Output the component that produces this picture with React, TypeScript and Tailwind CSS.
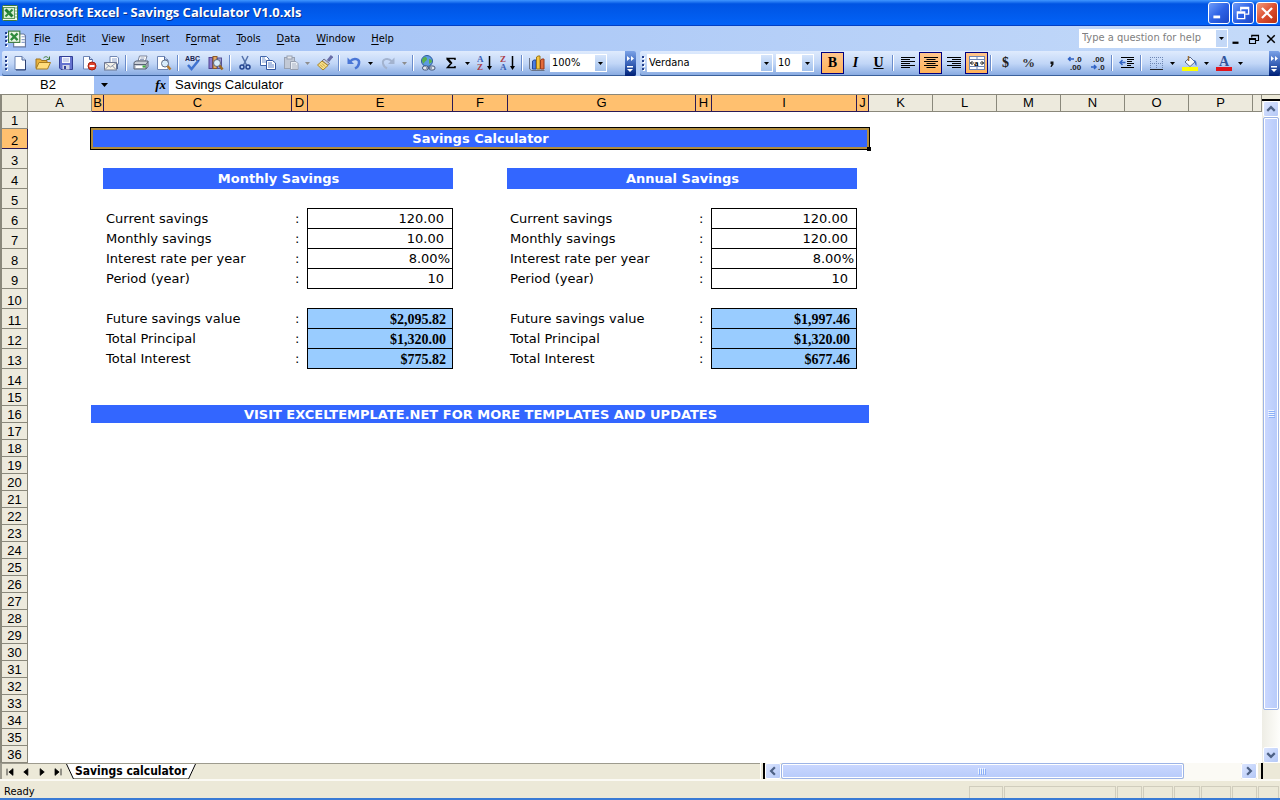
import type { ReactNode } from "react";

const menus = ["File", "Edit", "View", "Insert", "Format", "Tools", "Data", "Window", "Help"];
const menuKeys: Record<string, number> = { Format: 1 };

const columns = [
  { name: "A", width: "w-[64px]", active: false },
  { name: "B", width: "w-[12px]", active: true },
  { name: "C", width: "w-[188px]", active: true },
  { name: "D", width: "w-[16px]", active: true },
  { name: "E", width: "w-[145px]", active: true },
  { name: "F", width: "w-[55px]", active: true },
  { name: "G", width: "w-[188px]", active: true },
  { name: "H", width: "w-[16px]", active: true },
  { name: "I", width: "w-[145px]", active: true },
  { name: "J", width: "w-[12px]", active: true },
  { name: "K", width: "w-[64px]", active: false },
  { name: "L", width: "w-[64px]", active: false },
  { name: "M", width: "w-[64px]", active: false },
  { name: "N", width: "w-[64px]", active: false },
  { name: "O", width: "w-[64px]", active: false },
  { name: "P", width: "w-[64px]", active: false },
  { name: "", width: "", active: false },
];

type Line = { left: [string, string]; right: [string, string]; result?: boolean };

const lines: Record<number, Line> = {
  6: { left: ["Current savings", "120.00"], right: ["Current savings", "120.00"] },
  7: { left: ["Monthly savings", "10.00"], right: ["Monthly savings", "120.00"] },
  8: { left: ["Interest rate per year", "8.00%"], right: ["Interest rate per year", "8.00%"] },
  9: { left: ["Period (year)", "10"], right: ["Period (year)", "10"] },
  11: { left: ["Future savings value", "$2,095.82"], right: ["Future savings value", "$1,997.46"], result: true },
  12: { left: ["Total Principal", "$1,320.00"], right: ["Total Principal", "$1,320.00"], result: true },
  13: { left: ["Total Interest", "$775.82"], right: ["Total Interest", "$677.46"], result: true },
};

const statusPanels = ["w-[34px]", "w-[112px]", "w-[25px]", "w-[30px]", "w-[26px]", "w-[30px]", "w-[25px]", "w-[21px]"];

function Svg({ children, size = 16 }: { children: ReactNode; size?: number }) {
  return (
    <svg width={size} height={size} viewBox="0 0 16 16" fill="none" aria-hidden="true">
      {children}
    </svg>
  );
}

function Arrow({ className = "text-black" }: { className?: string }) {
  return (
    <svg className={className} width="5" height="3" viewBox="0 0 5 3" fill="currentColor" aria-hidden="true">
      <path d="M0 0h5L2.5 3z" />
    </svg>
  );
}

function Tool({ label, active, children }: { label: string; active?: boolean; children: ReactNode }) {
  return (
    <button
      type="button"
      aria-label={label}
      className={
        active
          ? "flex h-[22px] w-[23px] shrink-0 items-center justify-center border border-[#000080] bg-linear-to-b from-[#ffc58c] to-[#ffb258]"
          : "flex h-[22px] w-[23px] shrink-0 items-center justify-center"
      }
    >
      {children}
    </button>
  );
}

function Drop({ label, muted }: { label: string; muted?: boolean }) {
  return (
    <button type="button" aria-label={label} className="flex h-[22px] w-[11px] shrink-0 items-center justify-center">
      <Arrow className={muted ? "text-[#8d8d8d]" : "text-black"} />
    </button>
  );
}

function Sep() {
  return (
    <div className="flex h-[16px] w-[6px] shrink-0 justify-center">
      <div className="w-px bg-[#6a8ccb]" />
      <div className="w-px bg-white" />
    </div>
  );
}

function Grip() {
  return (
    <svg className="shrink-0" width="3" height="16" viewBox="0 0 3 16" aria-hidden="true">
      {[1, 5, 9, 13].map((y) => (
        <g key={y}>
          <rect x="1" y={y + 1} width="2" height="2" fill="#fff" />
          <rect x="0" y={y} width="2" height="2" fill="#27418e" />
        </g>
      ))}
    </svg>
  );
}

function Combo({ label, value, width }: { label: string; value: string; width: string }) {
  return (
    <div className={`relative h-[18px] shrink-0 bg-white ${width}`}>
      <select aria-label={label} className="block h-full w-full appearance-none bg-transparent pl-[2px] text-[11px] leading-4">
        <option>{value}</option>
      </select>
      <span className="pointer-events-none absolute inset-y-px right-px flex w-[11px] items-center justify-center bg-linear-to-b from-[#d6e5fb] to-[#a3c1ec]">
        <Arrow />
      </span>
    </div>
  );
}

function More() {
  return (
    <button
      type="button"
      aria-label="Toolbar options"
      className="flex h-[25px] w-[11px] shrink-0 items-center justify-center rounded-r-[2px] bg-linear-to-b from-[#7ba2e7] via-[#3b64ba] to-[#001d75]"
    >
      <svg width="9" height="23" viewBox="0 0 9 23" aria-hidden="true">
        <path d="M1 4l3 2.500-3 2.500zM5 4l3 2.500-3 2.500z" fill="#fff" />
        <path d="M1 14h6v1.500H1zM1 17h6l-3 3z" fill="#fff" />
      </svg>
    </button>
  );
}

function ExcelMark({ size = 16 }: { size?: number }) {
  return (
    <Svg size={size}>
      <rect x=".5" y=".5" width="15" height="15" rx="1" fill="#f2f8ea" stroke="#3d7a3d" />
      <path d="M13 3h2M13 6h2M13 9h2M13 12h2" stroke="#79a879" />
      <rect x="1.500" y="2.500" width="11" height="11" fill="#d9ecd2" stroke="#5c9a5c" />
      <path d="M3.500 4.500l7 7" stroke="#1f7a33" strokeWidth="3" />
      <path d="M10.500 4.500l-7 7" stroke="#2f8b3c" strokeWidth="2" />
    </Svg>
  );
}

function StandardTools() {
  return (
    <>
      <Tool label="New">
        <Svg>
          <path d="M3 1.500h7l3.500 3.500v9.500H3z" fill="#fff" stroke="#6d85b5" />
          <path d="M10 1.500V5h3.500" fill="#c9d8f2" stroke="#50689c" />
          <path d="M13.500 5v10H4" stroke="#2b3f70" />
        </Svg>
      </Tool>
      <Tool label="Open">
        <Svg>
          <path d="M1 13V4h4.500l1 1.500H12V13z" fill="#e9b33e" stroke="#9c7320" />
          <path d="M1 14l3-6.500h11.500L12.500 14z" fill="#ffdd7c" stroke="#a67c22" />
          <path d="M8.500 3c2-2 4-1.500 5 .5M14.500 1.500v3h-3" stroke="#3f7a36" />
        </Svg>
      </Tool>
      <Tool label="Save">
        <Svg>
          <path d="M1.500 1.500h13v13H3L1.500 13z" fill="#6572cf" stroke="#323f96" />
          <rect x="4" y="2" width="8" height="6" fill="#f4f6ff" />
          <path d="M5 4h6M5 6h6" stroke="#a6b0dc" />
          <rect x="4.500" y="10" width="7" height="4.500" fill="#cfd3e6" />
          <rect x="6" y="11" width="2" height="3" fill="#323f96" />
        </Svg>
      </Tool>
      <Tool label="Permission">
        <Svg>
          <path d="M2.500 1.500h6l3 3v9.500h-9z" fill="#fff" stroke="#6d85b5" />
          <path d="M8.500 1.500v3h3" fill="#c9d8f2" stroke="#50689c" />
          <circle cx="11" cy="11" r="4" fill="#e0442c" stroke="#a3200f" />
          <path d="M8.500 11h5" stroke="#fff" strokeWidth="2" />
        </Svg>
      </Tool>
      <Tool label="E-mail">
        <Svg>
          <path d="M6 1.500h7l1.500 1.500V9H6z" fill="#fff" stroke="#7288b4" />
          <path d="M8 4h5M8 6h5" stroke="#8fa4ce" />
          <rect x=".5" y="7.500" width="12" height="7.500" fill="#f3f1e8" stroke="#6d7690" />
          <path d="M.5 7.500l6 4.500 6-4.500M.5 15l4-4M12.500 15l-4-4" stroke="#8b93a8" />
          <path d="M13.500 9v5" stroke="#516896" />
        </Svg>
      </Tool>
      <Sep />
      <Tool label="Print">
        <Svg>
          <path d="M5 6l1.500-5H14l-1.500 5z" fill="#fff" stroke="#7a8399" />
          <path d="M7.500 3h4M7 4.500h4" stroke="#9aa6c0" />
          <path d="M1 7.500L3 6h12v5.500L13 14H1z" fill="#c9ced8" stroke="#596275" />
          <path d="M1 9.500h12M13 14V9.500l2-3" stroke="#596275" />
          <path d="M3 12h7" stroke="#fff" strokeWidth="2" />
          <rect x="9.500" y="10.500" width="3" height="2" fill="#40b13c" />
        </Svg>
      </Tool>
      <Tool label="Print preview">
        <Svg>
          <path d="M1.500 1.500h7l3.500 3.500v9.500H1.500z" fill="#fff" stroke="#6d85b5" />
          <path d="M8.500 1.500V5H12" fill="#c9d8f2" stroke="#50689c" />
          <circle cx="9" cy="8.500" r="3.500" fill="#d8ecfb" stroke="#5f6e8a" />
          <path d="M11.500 11l3 3.500" stroke="#b67a2c" strokeWidth="2.500" />
        </Svg>
      </Tool>
      <Sep />
      <Tool label="Spelling">
        <Svg>
          <text x="0" y="6" fontSize="7" fontWeight="bold" fontFamily="Liberation Sans, sans-serif" fill="#1b2450">
            ABC
          </text>
          <path d="M3 10l3.500 4L13.500 5.500" stroke="#3f73d1" strokeWidth="2.500" />
        </Svg>
      </Tool>
      <Tool label="Research">
        <Svg>
          <rect x="1" y="2.500" width="3.500" height="11" fill="#8a7ad0" stroke="#4e4290" />
          <rect x="5" y="1.500" width="4" height="12" fill="#e3a866" stroke="#8c5a28" />
          <rect x="9.500" y="3" width="4" height="10.500" fill="#9c9bd6" stroke="#555295" />
          <circle cx="9" cy="8" r="3.500" fill="#d8ecfb" stroke="#5c6577" />
          <path d="M11.500 10.500l3 4" stroke="#9c6a22" strokeWidth="2.500" />
        </Svg>
      </Tool>
      <Sep />
      <Tool label="Cut">
        <Svg>
          <path d="M5 1l4.500 9M11 1L6.500 10" stroke="#5573ab" strokeWidth="1.500" />
          <circle cx="5" cy="12" r="2" stroke="#24448f" strokeWidth="1.500" />
          <circle cx="11" cy="12" r="2" stroke="#24448f" strokeWidth="1.500" />
        </Svg>
      </Tool>
      <Tool label="Copy">
        <Svg>
          <path d="M.5 1.500h6l2.500 2.500v6.500H.5z" fill="#fff" stroke="#4267ab" />
          <path d="M2 5h4M2 7h4M2 3h3" stroke="#7897d1" />
          <path d="M6.500 5.500h6L15.500 8v6.500h-9z" fill="#fff" stroke="#3457a0" />
          <path d="M8 8h4M8 10h6M8 12h6" stroke="#5f82c9" />
        </Svg>
      </Tool>
      <Tool label="Paste">
        <Svg>
          <rect x="1.500" y="2.500" width="10" height="11" fill="#c2c9d6" stroke="#98a1b2" />
          <rect x="4" y="1" width="5" height="3" fill="#e4e7ed" stroke="#98a1b2" />
          <path d="M7.500 6.500H13l2 2v6H7.500z" fill="#e9edf4" stroke="#98a1b2" />
          <path d="M9 9h4M9 11h5M9 13h5" stroke="#a9b2c3" />
        </Svg>
      </Tool>
      <Drop label="Paste options" muted />
      <Tool label="Format painter">
        <Svg>
          <path d="M15 1l-4 5" stroke="#6a6ea8" strokeWidth="3" />
          <path d="M7 4l5.500 4.500-1.500 2-6-4.500z" fill="#c8c9d8" stroke="#6e7087" />
          <path d="M5 6l6 4.500L6 15 .5 10z" fill="#f8e08a" stroke="#a98425" />
          <path d="M3 9.500l3 3M5 8.500l3 3" stroke="#c59c36" />
        </Svg>
      </Tool>
      <Sep />
      <Tool label="Undo">
        <Svg>
          <path d="M4 6.500C8 2 14 4 13 8.500c-.5 2.500-2 4-4 5" stroke="#4a76d6" strokeWidth="2.500" />
          <path d="M1.500 2.500v6.500H8z" fill="#4a76d6" />
        </Svg>
      </Tool>
      <Drop label="Undo list" />
      <Tool label="Redo">
        <Svg>
          <path d="M12 6.500C8 2 2 4 3 8.500c.5 2.500 2 4 4 5" stroke="#a3b3cf" strokeWidth="2" />
          <path d="M14.500 2.500v6.500H8z" fill="#a3b3cf" />
        </Svg>
      </Tool>
      <Drop label="Redo list" muted />
      <Sep />
      <Tool label="Hyperlink">
        <Svg>
          <circle cx="7" cy="6" r="5.500" fill="#5c9be0" stroke="#2d5b9f" />
          <path d="M3 3c2-2 4-1 4 1S4 6 4 9C2 7 1 5 3 3zM9 4c2 0 3 1 3 3L9 9z" fill="#59b04b" />
          <rect x="2.500" y="11" width="6" height="4" rx="2" fill="#e1e6ee" stroke="#44597c" />
          <rect x="9" y="11" width="6" height="4" rx="2" fill="#e1e6ee" stroke="#44597c" />
          <path d="M6 13h6" stroke="#44597c" />
        </Svg>
      </Tool>
      <Tool label="AutoSum">
        <Svg>
          <path d="M12 5V3.500H4.500L8.500 8l-4 4.500H12V11" stroke="#000" strokeWidth="1.500" />
          <path d="M4 3.500L8 8" stroke="#000" strokeWidth="2" />
        </Svg>
      </Tool>
      <Drop label="AutoSum functions" />
      <Tool label="Sort ascending">
        <SortIcon top="A" bottom="Z" topColor="#3a5fb4" bottomColor="#ab3c46" />
      </Tool>
      <Tool label="Sort descending">
        <SortIcon top="Z" bottom="A" topColor="#ab3c46" bottomColor="#3a5fb4" />
      </Tool>
      <Sep />
      <Tool label="Chart wizard">
        <Svg>
          <path d="M.5 3v11l2 1.500h13" stroke="#6b7487" />
          <path d="M3.500 6l1.500-1h2v9h-3.500z" fill="#4b7de0" stroke="#274a98" />
          <path d="M7.500 2L9 1h2v13H7.500z" fill="#f5c640" stroke="#9e7716" />
          <path d="M11.500 5L13 4h2v10h-3.500z" fill="#e36a3a" stroke="#97381a" />
        </Svg>
      </Tool>
    </>
  );
}

function SortIcon(p: { top: string; bottom: string; topColor: string; bottomColor: string }) {
  return (
    <Svg>
      <g fontSize="9" fontWeight="bold" fontFamily="Liberation Serif, serif">
        <text x="0" y="7" fill={p.topColor}>
          {p.top}
        </text>
        <text x="0" y="15" fill={p.bottomColor}>
          {p.bottom}
        </text>
      </g>
      <path d="M12.500 1v12" stroke="#000" strokeWidth="1.500" />
      <path d="M10 11h5l-2.500 4z" fill="#000" />
    </Svg>
  );
}

function DecimalIcon({ top, bottom, flip }: { top: string; bottom: string; flip?: boolean }) {
  return (
    <Svg>
      <g fontSize="8" fontWeight="bold" fontFamily="Liberation Sans, sans-serif" fill="#222">
        <text x={flip ? 3 : 8} y="7">
          {top}
        </text>
        <text x={flip ? 8 : 3} y="15">
          {bottom}
        </text>
      </g>
      {flip ? (
        <path d="M1 12h5M4 10l2 2-2 2" stroke="#2f62c4" strokeWidth="1.500" />
      ) : (
        <path d="M7 4H1M3.500 2l-2 2 2 2" stroke="#2f62c4" strokeWidth="1.500" />
      )}
    </Svg>
  );
}

function FormatTools() {
  return (
    <>
      <Tool label="Bold" active>
        <span className="font-['Liberation_Serif',serif] text-[14px] leading-4 font-bold">B</span>
      </Tool>
      <Tool label="Italic">
        <span className="font-['Liberation_Serif',serif] text-[14px] leading-4 font-bold italic">I</span>
      </Tool>
      <Tool label="Underline">
        <span className="font-['Liberation_Serif',serif] text-[14px] leading-4 font-bold underline">U</span>
      </Tool>
      <Sep />
      <Tool label="Align left">
        <Svg>
          <path d="M1 2.500h14M1 4.500h9M1 6.500h14M1 8.500h9M1 10.500h14M1 12.500h9" stroke="#000" />
        </Svg>
      </Tool>
      <Tool label="Center" active>
        <Svg>
          <path d="M1 2.500h14M3.500 4.500h9M1 6.500h14M3.500 8.500h9M1 10.500h14M3.500 12.500h9" stroke="#000" />
        </Svg>
      </Tool>
      <Tool label="Align right">
        <Svg>
          <path d="M1 2.500h14M6 4.500h9M1 6.500h14M6 8.500h9M1 10.500h14M6 12.500h9" stroke="#000" />
        </Svg>
      </Tool>
      <Tool label="Merge and center" active>
        <Svg>
          <rect x=".5" y="1.500" width="15" height="13" fill="#fff" stroke="#6f86b5" />
          <path d="M1 4.500h14M1 11.500h14M8 1.500v3M8 11.500v3" stroke="#6f86b5" />
          <path d="M1 8h4M11 8h4M3.500 6L1.500 8l2 2M12.500 6l2 2-2 2" stroke="#222" />
          <text x="5" y="10.500" fontSize="9" fontWeight="bold" fontFamily="Liberation Serif, serif" fill="#000">
            a
          </text>
        </Svg>
      </Tool>
      <Sep />
      <Tool label="Currency style">
        <span className="font-['Liberation_Serif',serif] text-[14px] leading-4 font-bold text-[#222]">$</span>
      </Tool>
      <Tool label="Percent style">
        <span className="font-['Liberation_Serif',serif] text-[13px] leading-4 font-bold text-[#333]">%</span>
      </Tool>
      <Tool label="Comma style">
        <Svg>
          <path d="M6.500 6.500h3v3L7.500 12H6.500l1-3h-1z" fill="#111" />
        </Svg>
      </Tool>
      <Tool label="Increase decimal">
        <DecimalIcon top=".0" bottom=".00" />
      </Tool>
      <Tool label="Decrease decimal">
        <DecimalIcon top=".00" bottom=".0" flip />
      </Tool>
      <Sep />
      <Tool label="Decrease indent">
        <Svg>
          <path d="M2 2.500h13M8 4.500h7M8 6.500h5M8 8.500h7M8 10.500h4M2 12.500h13" stroke="#000" />
          <path d="M6.500 7.500H1M3.500 5l-2.500 2.500 2.500 2.500" stroke="#2f62c4" strokeWidth="1.500" />
        </Svg>
      </Tool>
      <Sep />
      <Tool label="Borders">
        <Svg>
          <path d="M2 2.500h13M2 8.500h13M2.500 2v12M8.500 2v12M14.500 2v12" stroke="#7088b4" strokeDasharray="1 1" />
          <path d="M2 14.500h13" stroke="#222" />
        </Svg>
      </Tool>
      <Drop label="Border styles" />
      <Tool label="Fill color">
        <Svg>
          <path d="M3 7l5-5 5 5-5 4.500z" fill="#f6f8fc" stroke="#5b6c92" />
          <path d="M6.500 1v5" stroke="#9b6f36" strokeWidth="1.500" />
          <path d="M11 5c3 0 4 2 3.500 6-1.500-1-2-3-1.500-4z" fill="#3f6fc9" />
          <rect x="0" y="12" width="16" height="4" fill="#ffff00" />
        </Svg>
      </Tool>
      <Drop label="Fill colors" />
      <Tool label="Font color">
        <Svg>
          <text x="3" y="11" fontSize="14" fontWeight="bold" fontFamily="Liberation Serif, serif" fill="#31559d">
            A
          </text>
          <rect x="0" y="12" width="16" height="4" fill="#e0131b" />
        </Svg>
      </Tool>
      <Drop label="Font colors" />
    </>
  );
}

function TitleBar() {
  return (
    <header className="flex h-[26px] items-center bg-linear-to-b from-[#3f96ff] via-[#0054e3] via-15% to-[#0363f8] px-[2px] shadow-[inset_0_-1px_0_#0340c4]">
      <ExcelMark />
      <h1 className="ml-[3px] flex-1 font-['Open_Sans',sans-serif] text-[13px] font-bold text-white [text-shadow:1px_1px_0_#0a2f8a]">
        Microsoft Excel - Savings Calculator V1.0.xls
      </h1>
      <div className="flex gap-[2px]">
        <button type="button" aria-label="Minimize" className="rounded-[3px] border border-white bg-linear-to-br from-[#6f9bf8] via-[#2e63e6] to-[#1c46c6] p-px">
          <Svg size={18}>
            <path d="M3 11.500h6" stroke="#fff" strokeWidth="2.500" />
          </Svg>
        </button>
        <button type="button" aria-label="Restore" className="rounded-[3px] border border-white bg-linear-to-br from-[#6f9bf8] via-[#2e63e6] to-[#1c46c6] p-px">
          <Svg size={18}>
            <path d="M6 6V3h7v6h-3M6 4h7" stroke="#fff" strokeWidth="1.200" />
            <path d="M3 7h6.500v6H3zM3 8h6.500" stroke="#fff" strokeWidth="1.200" />
          </Svg>
        </button>
        <button type="button" aria-label="Close" className="rounded-[3px] border border-white bg-linear-to-br from-[#f0997c] via-[#dd5030] to-[#b82e0e] p-px">
          <Svg size={18}>
            <path d="M3.500 3.500l9 9M12.500 3.500l-9 9" stroke="#fff" strokeWidth="2" />
          </Svg>
        </button>
      </div>
    </header>
  );
}

function MenuBar() {
  return (
    <nav className="flex h-[25px] items-center pl-[5px] text-[11px]">
      <Grip />
      <div>
        <Svg size={18}>
          <path d="M5 3.500h9l1.500 1.500v10H5z" fill="#fff" stroke="#66789f" />
          <path d="M12 6h3M12 8.500h3M12 11h3" stroke="#8ba0c8" />
          <rect x=".5" y="1" width="10" height="10" fill="#eaf5e4" stroke="#3d7a3d" />
          <path d="M2.500 3l6 6M8.500 3l-6 6" stroke="#2f8b3c" strokeWidth="2" />
        </Svg>
      </div>
      {menus.map((m) => {
        const k = menuKeys[m] ?? 0;
        return (
          <button key={m} type="button" className="px-2 pt-px">
            {m.slice(0, k)}
            <span className="underline underline-offset-2">{m[k]}</span>
            {m.slice(k + 1)}
          </button>
        );
      })}
      <div className="ml-auto flex h-[19px] w-[149px] bg-white">
        <input
          aria-label="Type a question for help"
          placeholder="Type a question for help"
          className="min-w-0 flex-1 pl-[3px] outline-none placeholder:text-[#808080]"
        />
        <button type="button" aria-label="Recent questions" className="my-px mr-px flex w-[11px] items-center justify-center bg-[#c3d8f7]">
          <Arrow />
        </button>
      </div>
      <div className="ml-[3px] flex items-center gap-[5px] pr-[3px]">
        <button type="button" aria-label="Minimize workbook">
          <Svg size={12}>
            <path d="M2 13h8" stroke="#000" strokeWidth="3" />
          </Svg>
        </button>
        <button type="button" aria-label="Restore workbook">
          <Svg size={12}>
            <path d="M5 6V3h9v7h-4M5 3.500h9M2 7.500h8V14H2zM2 8.500h8" stroke="#000" strokeWidth="1.500" />
          </Svg>
        </button>
        <button type="button" aria-label="Close workbook">
          <Svg size={12}>
            <path d="M3 3l10 10M13 3L3 13" stroke="#000" strokeWidth="2" />
          </Svg>
        </button>
      </div>
    </nav>
  );
}

function Toolbars() {
  return (
    <div className="flex h-[25px] pl-[2px]">
      <div className="flex w-[634px] shrink-0 items-center rounded-[2px] bg-linear-to-b from-[#dfebfd] via-[#c1d6f7] to-[#85a8e0] pb-px pl-[3px] shadow-[inset_0_-1px_0_#3b619c]">
        <Grip />
        <StandardTools />
        <div className="ml-[2px]">
          <Combo label="Zoom" value="100%" width="w-[57px]" />
        </div>
        <div className="ml-auto self-start">
          <More />
        </div>
      </div>
      <div className="ml-1 flex min-w-0 flex-1 items-center rounded-l-[2px] bg-linear-to-b from-[#dfebfd] via-[#c1d6f7] to-[#85a8e0] pb-px pl-[2px] shadow-[inset_0_-1px_0_#3b619c]">
        <Grip />
        <div className="mr-[7px] ml-[2px] flex gap-[3px]">
          <Combo label="Font" value="Verdana" width="w-[126px]" />
          <Combo label="Font size" value="10" width="w-[38px]" />
        </div>
        <FormatTools />
        <div className="ml-auto self-start">
          <More />
        </div>
      </div>
    </div>
  );
}

function FormulaBar() {
  return (
    <div className="flex h-[18px] items-stretch bg-white pl-[2px] font-['Liberation_Sans',sans-serif] text-[13px] leading-4">
      <input aria-label="Name box" defaultValue="B2" className="w-[92px] bg-white text-center outline-none" />
      <button type="button" aria-label="Defined names" className="flex w-[20px] items-center justify-center bg-[#9ebef5]">
        <svg width="7" height="4" viewBox="0 0 7 4" aria-hidden="true">
          <path d="M0 0h7L3.500 4z" />
        </svg>
      </button>
      <button type="button" aria-label="Insert function" className="w-[55px] shrink-0 bg-[#9ebef5] pr-[3px] text-right font-['Liberation_Serif',serif] text-[13px] font-bold italic">
        fx
      </button>
      <input aria-label="Formula bar" defaultValue="Savings Calculator" className="min-w-0 flex-1 bg-white pl-[6px] outline-none" />
    </div>
  );
}

const barCell =
  "bg-[#3366ff] text-center align-middle font-bold text-white shadow-[-1px_-1px_0_#3366ff,-1px_0_0_#3366ff,0_-1px_0_#3366ff]";

function Pair({ label, value, result }: { label: string; value: string; result?: boolean }) {
  const inputPad = value.endsWith("%") ? "pr-[2px]" : "pr-2";
  return (
    <>
      <td className="pl-[2px] align-middle whitespace-nowrap">{label}</td>
      <td className="pl-[3px] align-middle">:</td>
      <td
        className={
          result
            ? "border-r border-b border-black bg-[#99ccff] pt-[2px] pr-[6px] text-right align-bottom font-['Liberation_Serif',serif] text-[14px] font-bold shadow-[-1px_-1px_0_#000,-1px_0_0_#000,0_-1px_0_#000]"
            : `border-r border-b border-black text-right align-middle shadow-[-1px_-1px_0_#000,-1px_0_0_#000,0_-1px_0_#000] ${inputPad}`
        }
      >
        {value}
      </td>
    </>
  );
}

function RowCells({ n }: { n: number }) {
  if (n === 2) {
    return (
      <>
        <td />
        <td colSpan={9} className={`relative ${barCell}`}>
          Savings Calculator
          <span className="absolute -top-[2px] -right-px -bottom-px -left-[2px] border border-black shadow-[inset_0_0_0_2px_#b08c3c]" />
          <span className="absolute -right-[2px] -bottom-[2px] size-1 bg-black" />
        </td>
        <td colSpan={7} />
      </>
    );
  }
  if (n === 4) {
    return (
      <>
        <td colSpan={2} />
        <td colSpan={3} className={barCell}>
          Monthly Savings
        </td>
        <td />
        <td colSpan={3} className={barCell}>
          Annual Savings
        </td>
        <td colSpan={8} />
      </>
    );
  }
  if (n === 16) {
    return (
      <>
        <td />
        <td colSpan={9} className={barCell}>
          VISIT EXCELTEMPLATE.NET FOR MORE TEMPLATES AND UPDATES
        </td>
        <td colSpan={7} />
      </>
    );
  }
  const line = lines[n];
  if (!line) return <td colSpan={17} />;
  return (
    <>
      <td colSpan={2} />
      <Pair label={line.left[0]} value={line.left[1]} result={line.result} />
      <td />
      <Pair label={line.right[0]} value={line.right[1]} result={line.result} />
      <td colSpan={8} />
    </>
  );
}

function Sheet() {
  const rows = Array.from({ length: 36 }, (_, i) => i + 1);
  return (
    <div className="min-w-0 flex-1 overflow-hidden border-t border-l-2 border-[#8a887b] bg-white">
      <table className="w-full table-fixed border-separate border-spacing-0 font-['Verdana','DejaVu_Sans',sans-serif] text-[13px] leading-4">
        <colgroup>
          <col className="w-[26px]" />
          {columns.map((c, i) => (
            <col key={i} className={c.width} />
          ))}
        </colgroup>
        <thead className="font-['Liberation_Sans',sans-serif]">
          <tr className="h-[17px]">
            <th className="border-r border-b border-[#8a887b] bg-[#ece9d8]" />
            {columns.map((c, i) => (
              <th
                key={i}
                className={
                  c.active
                    ? "border-r border-b border-[#2a1a55] bg-[#ffc06f] font-normal"
                    : "border-r border-b border-[#8a887b] bg-[#edeadd] font-normal"
                }
              >
                {c.name}
              </th>
            ))}
          </tr>
        </thead>
        <tbody>
          {rows.map((n) => (
            <tr key={n} className={n > 1 && n < 15 ? "h-[20px]" : "h-[17px]"}>
              <th
                scope="row"
                className={
                  n === 2
                    ? "border-r border-b border-[#2a1a55] bg-[#ffc06f] pt-[2px] align-bottom font-['Liberation_Sans',sans-serif] leading-[14px] font-normal"
                    : "border-r border-b border-[#8a887b] bg-[#edeadd] pt-[2px] align-bottom font-['Liberation_Sans',sans-serif] leading-[14px] font-normal"
                }
              >
                {n}
              </th>
              <RowCells n={n} />
            </tr>
          ))}
        </tbody>
      </table>
    </div>
  );
}

function ScrollButton({ label, d }: { label: string; d: string }) {
  return (
    <button type="button" aria-label={label} className="flex size-4 shrink-0 items-center justify-center rounded-[2px] border border-white bg-linear-to-br from-[#dbe5ff] to-[#b4c8f6]">
      <Svg size={12}>
        <path d={d} stroke="#4d6185" strokeWidth="3" />
      </Svg>
    </button>
  );
}

function VerticalScroll() {
  return (
    <div className="flex w-[18px] shrink-0 flex-col items-center bg-linear-to-r from-[#eeede5] to-[#fefefb]">
      <div className="h-[7px] w-full shrink-0 border-t border-b-2 border-t-[#8a887b] border-b-black bg-[#ece9d8]" />
      <ScrollButton label="Scroll up" d="M3 10.500l5-5 5 5" />
      <div className="flex w-4 grow-[16] basis-0 items-center justify-center rounded-[2px] border border-[#9db4e6] bg-linear-to-r from-[#cbd8ff] to-[#b7cbfa] shadow-[inset_0_0_0_1px_#fff]">
        <svg width="7" height="8" viewBox="0 0 7 8" aria-hidden="true">
          <path d="M0 .5h6M0 2.500h6M0 4.500h6M0 6.500h6" stroke="#eef4fe" />
          <path d="M1 1.500h6M1 3.500h6M1 5.500h6M1 7.500h6" stroke="#8cb0f8" />
        </svg>
      </div>
      <div className="grow basis-0" />
      <ScrollButton label="Scroll down" d="M3 5.500l5 5 5-5" />
    </div>
  );
}

const navButtons = [
  { label: "First sheet", d: "M4 3.500v9M12 3.500v9L6.500 8z" },
  { label: "Previous sheet", d: "M10.500 3.500v9L5 8z" },
  { label: "Next sheet", d: "M5.500 3.500v9L11 8z" },
  { label: "Last sheet", d: "M12 3.500v9M4 3.500v9L9.500 8z" },
];

function TabBar() {
  return (
    <div className="grid h-[18px] grid-cols-[760fr_520fr] border-b-2 border-[#fbfaf4] bg-[#ece9d8]">
      <div className="flex overflow-hidden border-t border-l-2 border-[#9d9b8e]">
        {navButtons.map((b) => (
          <button key={b.label} type="button" aria-label={b.label} className="flex w-4 shrink-0 items-center justify-center">
            <Svg size={12}>
              <path d={b.d} fill="#000" stroke="#000" />
            </Svg>
          </button>
        ))}
        <div className="flex">
          <svg className="shrink-0" width="8" height="16" viewBox="0 0 8 16" aria-hidden="true">
            <path d="M0 0h8v15H7z" fill="#fff" />
            <path d="M.5 0L7.500 15" stroke="#000" />
          </svg>
          <button type="button" className="border-b border-[#8a887b] bg-white px-px text-[12px] leading-[14px] font-bold">
            Savings calculator
          </button>
          <svg className="shrink-0" width="8" height="16" viewBox="0 0 8 16" aria-hidden="true">
            <path d="M8 0H0v15h1z" fill="#fff" />
            <path d="M7.500 0L.5 15" stroke="#000" />
          </svg>
        </div>
      </div>
      <div className="flex">
        <div className="h-full w-[5px] shrink-0 border-r-2 border-l border-r-black border-l-white" />
        <ScrollButton label="Scroll left" d="M10.500 3l-5 5 5 5" />
        <div className="flex h-4 grow-[7] basis-0 items-center justify-center rounded-[2px] border border-[#9db4e6] bg-linear-to-b from-[#cbd8ff] to-[#b7cbfa] shadow-[inset_0_0_0_1px_#fff]">
          <svg width="8" height="7" viewBox="0 0 8 7" aria-hidden="true">
            <path d="M.5 0v6M2.500 0v6M4.500 0v6M6.500 0v6" stroke="#eef4fe" />
            <path d="M1.500 1v6M3.500 1v6M5.500 1v6M7.500 1v6" stroke="#8cb0f8" />
          </svg>
        </div>
        <div className="grow basis-0 bg-[#fbfaf5]" />
        <ScrollButton label="Scroll right" d="M5.500 3l5 5-5 5" />
        <div className="h-full w-[6px] shrink-0 border-r-2 border-l border-r-black border-l-white" />
        <div className="w-[17px] shrink-0" />
      </div>
    </div>
  );
}

function StatusBar() {
  return (
    <footer className="flex h-[19px] items-end border-b-2 border-[#3a7bd5] bg-[#ece9d8] pr-px pl-1 text-[11px]">
      <span className="flex-1 leading-3">Ready</span>
      <div className="flex gap-px">
        {statusPanels.map((w, i) => (
          <div key={i} className={`h-3 border border-b-0 border-[#d0cdbd] ${w}`} />
        ))}
      </div>
    </footer>
  );
}

export default function App() {
  return (
    <div className="flex min-h-screen flex-col bg-linear-to-r from-[#9ebef5] to-[#c4daf9] font-['Tahoma','DejaVu_Sans_Condensed',sans-serif] text-black">
      <TitleBar />
      <MenuBar />
      <Toolbars />
      <FormulaBar />
      <main className="flex flex-1">
        <Sheet />
        <VerticalScroll />
      </main>
      <TabBar />
      <StatusBar />
    </div>
  );
}
